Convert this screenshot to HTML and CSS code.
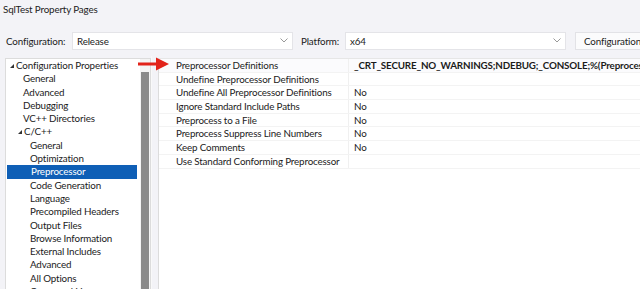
FILE: index.html
```html
<!DOCTYPE html>
<html>
<head>
<meta charset="utf-8">
<link rel="stylesheet" href="styles.css">
</head>
<body>
<div class="window">
  <div class="title">SqlTest Property Pages</div>
  <div class="toolbar">
    <span class="label">Configuration:</span>
    <div class="select"><span>Release</span><svg class="chev" width="8" height="5" viewBox="0 0 8 5"><path d="M0.5 0.5 L4 4 L7.5 0.5" fill="none" stroke="#999" stroke-width="1"/></svg></div>
    <span class="label plat">Platform:</span>
    <div class="select"><span>x64</span><svg class="chev" width="8" height="5" viewBox="0 0 8 5"><path d="M0.5 0.5 L4 4 L7.5 0.5" fill="none" stroke="#999" stroke-width="1"/></svg></div>
    <div class="button">Configuration Manager...</div>
  </div>
  <div class="main">
    <div class="tree">
      <div class="tree-items">
        <div class="node l0"><span class="tri"></span>Configuration Properties</div>
        <div class="node l1">General</div>
        <div class="node l1">Advanced</div>
        <div class="node l1">Debugging</div>
        <div class="node l1">VC++ Directories</div>
        <div class="node l1b"><span class="tri"></span>C/C++</div>
        <div class="node l2">General</div>
        <div class="node l2">Optimization</div>
        <div class="node l2 sel">Preprocessor</div>
        <div class="node l2">Code Generation</div>
        <div class="node l2">Language</div>
        <div class="node l2">Precompiled Headers</div>
        <div class="node l2">Output Files</div>
        <div class="node l2">Browse Information</div>
        <div class="node l2">External Includes</div>
        <div class="node l2">Advanced</div>
        <div class="node l2">All Options</div>
        <div class="node l2">Command Line</div>
      </div>
      <div class="scroll"><div class="thumb"></div></div>
    </div>
    <div class="gap"></div>
    <div class="props">
      <div class="row first"><div class="name">Preprocessor Definitions</div><div class="val bold">_CRT_SECURE_NO_WARNINGS;NDEBUG;_CONSOLE;%(PreprocessorDefinitions)</div></div>
      <div class="row"><div class="name">Undefine Preprocessor Definitions</div><div class="val"></div></div>
      <div class="row"><div class="name">Undefine All Preprocessor Definitions</div><div class="val">No</div></div>
      <div class="row"><div class="name">Ignore Standard Include Paths</div><div class="val">No</div></div>
      <div class="row"><div class="name">Preprocess to a File</div><div class="val">No</div></div>
      <div class="row"><div class="name">Preprocess Suppress Line Numbers</div><div class="val">No</div></div>
      <div class="row"><div class="name">Keep Comments</div><div class="val">No</div></div>
      <div class="row"><div class="name">Use Standard Conforming Preprocessor</div><div class="val"></div></div>
    </div>
  </div>
  <svg class="arrow" width="32" height="14" viewBox="0 0 32 14">
    <rect x="0" y="5.5" width="20" height="3" fill="#e2231a"/>
    <path d="M18 0.5 L31 7 L18 13.5 Z" fill="#e2231a"/>
  </svg>
</div>
</body>
</html>
```

FILE: styles.css
```css
* { box-sizing: border-box; }
html, body { margin: 0; padding: 0; }
body {
  width: 640px;
  height: 289px;
  overflow: hidden;
  background: #f3f3f7;
  font-family: Lato, "Open Sans", sans-serif;
  font-size: 9.8px;
  letter-spacing: -0.15px;
  color: #1b1b1b;
}
.window { position: relative; width: 640px; height: 289px; overflow: hidden; }
.title {
  height: 28px;
  padding: 2px 0 0 3px;
  line-height: 14px;
  color: #222;
}
.toolbar {
  display: flex;
  align-items: center;
  height: 22px;
  padding-top: 3px;
  white-space: nowrap;
}
.label { padding-left: 6px; width: 72px; flex-shrink: 0; }
.label.plat { padding-left: 8px; width: 52px; }
.select {
  width: 221px;
  flex-shrink: 0;
  height: 18px;
  background: #ffffff;
  border: 1px solid #e4e4e8;
  display: flex;
  align-items: center;
  justify-content: space-between;
  padding: 0 3px 0 4px;
}
.chev { margin-right: 1px; }
.button {
  margin-left: 9px;
  height: 18px;
  background: #fbfbfc;
  border: 1px solid #e2e2e6;
  padding: 0 8px;
  line-height: 16px;
  flex-shrink: 0;
}
.main {
  display: flex;
  margin-top: 6px;
  height: 234px;
}
.tree {
  margin-left: 5px;
  width: 146px;
  flex-shrink: 0;
  margin-top: 2px;
  background: #ffffff;
  border: 1px solid #dcdcdc;
  border-bottom: none;
  display: flex;
}
.tree-items { flex: 1; overflow: hidden; }
.node {
  height: 13.3px;
  line-height: 13.3px;
  white-space: nowrap;
}
.l0 { padding-left: 4px; }
.l1 { padding-left: 17px; }
.l1b { padding-left: 12px; }
.l2 { padding-left: 24px; }
.tri {
  display: inline-block;
  width: 0; height: 0;
  border-left: 4px solid transparent;
  border-bottom: 4px solid #333;
  margin-right: 2px;
  vertical-align: 1px;
}
.sel {
  background: #0f5fb6;
  color: #ffffff;
  margin: 0 3px 0 1px;
}
.scroll {
  width: 10px;
  background: #f4f4f4;
  padding: 13px 1px 0 1px;
  display: flex;
}
.thumb { flex: 1; background: #8a8a8a; }
.gap { width: 7px; flex-shrink: 0; border-left: 1px solid #f9f9f9; }
.props {
  flex: 1;
  min-width: 0;
  margin-top: 2px;
  background: #ffffff;
  border-left: 1px solid #dcdcdc;
  border-top: 1px solid #e6e6e6;
  overflow: hidden;
}
.row {
  display: flex;
  height: 13.7px;
  line-height: 13.4px;
  border-bottom: 1px solid #f3f3f3;
  white-space: nowrap;
}
.name {
  width: 190px;
  flex-shrink: 0;
  padding-left: 17px;
  border-right: 1px solid #f0f0f0;
}
.val { padding-left: 5px; }
.bold { font-weight: 700; }
.first { background: #fbfbfd; }
.arrow { position: absolute; left: 138px; top: 57px; }
```
